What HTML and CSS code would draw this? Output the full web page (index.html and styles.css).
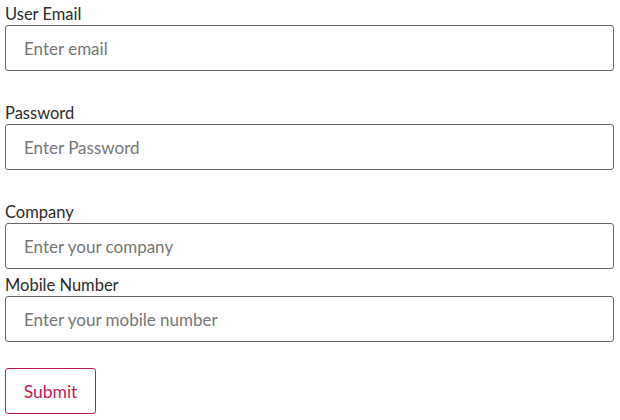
FILE: index.html
```html
<!DOCTYPE html>
<html lang="en">
  <head>
    <meta charset="UTF-8" />
    <meta name="viewport" content="width=device-width, initial-scale=1" />
    <title>Sign up</title>
    <link rel="stylesheet" href="styles.css">
  </head>
  <body>
    <form class="signup-form">
      <div class="field field-spaced">
        <label for="email">User Email</label>
        <input id="email" type="email" placeholder="Enter email" />
      </div>

      <div class="field field-spaced">
        <label for="password">Password</label>
        <input id="password" type="password" placeholder="Enter Password" />
      </div>

      <div class="field">
        <label for="company">Company</label>
        <input id="company" type="text" placeholder="Enter your company" />
      </div>

      <div class="field field-mobile">
        <label for="mobile">Mobile Number</label>
        <input id="mobile" type="tel" placeholder="Enter your mobile number" />
      </div>

      <button type="submit" class="btn-submit">Submit</button>
    </form>
  </body>
</html>
```

FILE: styles.css
```css
body {
  margin: 0;
  background-color: #fff;
  color: #333;
  font-family: "Source Sans Pro", Lato, "Noto Sans", sans-serif;
  font-size: 16px;
}

.signup-form {
  display: flex;
  flex-direction: column;
  align-items: flex-start;
  padding: 0 6px 0 5px;
}

.field {
  display: flex;
  flex-direction: column;
  width: 100%;
}

.field-spaced {
  margin-bottom: 28px;
}

.field-mobile {
  margin-top: 2px;
  margin-bottom: 26px;
}

label {
  padding-top: 3px;
  line-height: 22px;
  font-size: 16.5px;
  color: #2b2b2b;
}

input {
  box-sizing: border-box;
  width: 100%;
  height: 46px;
  padding: 0 18px;
  border: 1px solid #666;
  border-radius: 3px;
  font-family: inherit;
  font-size: 17px;
  color: #333;
}

input::placeholder {
  color: #767676;
}

.btn-submit {
  box-sizing: border-box;
  width: 91px;
  height: 46px;
  padding: 0;
  background-color: #fff;
  border: 1px solid #c2185b;
  border-radius: 3px;
  color: #c2185b;
  font-family: inherit;
  font-size: 17.5px;
  cursor: pointer;
}

.btn-submit:hover {
  background-color: #c2185b;
  color: #fff;
}
```
